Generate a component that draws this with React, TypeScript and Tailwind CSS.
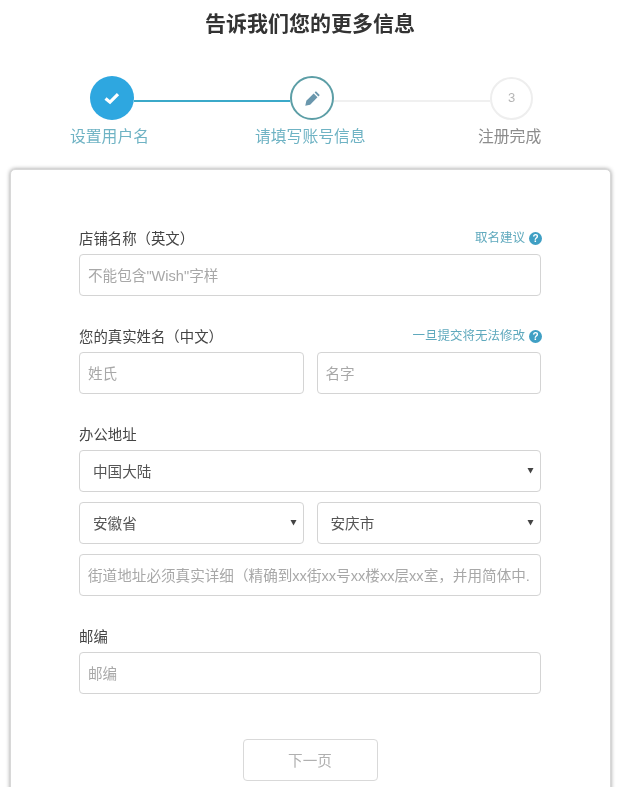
import React from "react";

const font = '"Liberation Sans", "Noto Sans CJK SC", sans-serif';

function Help() {
  return (
    <span className="mr-[-1px] flex h-[13px] w-[13px] items-center justify-center rounded-full bg-[#3f9fc4] text-[10px] font-bold leading-none text-white">?</span>
  );
}

function Label({ text, hint }: { text: string; hint?: string }) {
  return (
    <div className="flex h-[26px] items-center justify-between pb-[2px]">
      <span className="text-[14.4px] text-[#444] [text-spacing-trim:space-all]">{text}</span>
      {hint && (
        <span className="mb-[3px] flex items-center gap-[4px] text-[12.5px] text-[#5fa9bd]">
          {hint}
          <Help />
        </span>
      )}
    </div>
  );
}

function Field({ placeholder, className = "" }: { placeholder: string; className?: string }) {
  return (
    <div className={`flex h-[42px] items-center whitespace-nowrap rounded-[4px] border border-[#d4d4d4] bg-white pl-[8px] pt-[3px] text-[14.6px] text-[#a8a8a8] [text-spacing-trim:space-all] ${className}`}>
      {placeholder}
    </div>
  );
}

function Select({ value, className = "" }: { value: string; className?: string }) {
  return (
    <div className={`flex h-[42px] items-center justify-between rounded-[4px] border border-[#d4d4d4] bg-white pl-[13px] pr-[6px] text-[14.6px] text-[#555] ${className}`}>
      <span className="pt-[3px]">{value}</span>
      <svg width="7" height="7" viewBox="0 0 7 7" className="mt-[-2px]"><path d="M0.5 1h6L3.5 6.5z" fill="#444" /></svg>
    </div>
  );
}

export default function App() {
  return (
    <div className="h-[787px] w-[620px] overflow-hidden bg-white blur-[0.35px]" style={{ fontFamily: font }}>
      <h1 className="pt-[11px] text-center text-[21px] font-bold leading-[26px] text-[#333]">告诉我们您的更多信息</h1>

      <div className="ml-[90px] mt-[39px] flex w-[443px] items-center">
        <div className="flex h-[44px] w-[44px] shrink-0 items-center justify-center rounded-full bg-[#2ea7e0]">
          <svg width="16" height="14" viewBox="0 0 16 14"><path d="M1.5 7.5l4.5 3.7 8-8" fill="none" stroke="#fff" strokeWidth="3.2" /></svg>
        </div>
        <div className="mt-[5px] h-[2px] flex-1 bg-[#3ba9c9]" />
        <div className="flex h-[44px] w-[44px] shrink-0 items-center justify-center rounded-full border-2 border-[#5c9ea6] bg-white">
          <svg width="17" height="17" viewBox="0 0 16 16">
            <path d="M1.2 14.8l1-4.6 6.9-6.9 3.6 3.6-6.9 6.9z" fill="#6a97ad" />
            <path d="M10 2.4l1.2-1.2 3.6 3.6-1.2 1.2z" fill="#6a97ad" />
          </svg>
        </div>
        <div className="mt-[5px] h-[2px] flex-1 bg-[#f0f0f0]" />
        <div className="flex h-[43px] w-[43px] shrink-0 items-center justify-center rounded-full border-2 border-[#eeeeee] bg-white text-[13px] text-[#b5b5b5]">3</div>
      </div>

      <div className="mt-[3px] flex h-[28px] items-center text-[15.8px] leading-[28px]">
        <span className="ml-[70px] w-[185px] text-[#6fb3c4]">设置用户名</span>
        <span className="w-[223px] text-[#6fb3c4]">请填写账号信息</span>
        <span className="text-[#8c8c8c]">注册完成</span>
      </div>

      <div className="ml-[10px] mt-[18px] h-[640px] w-[601px] rounded-[5px] border border-[#d8d8d8] bg-white pl-[68px] pr-[69px] pt-[58px] shadow-[0_0_4px_rgba(0,0,0,0.4)]">
        <Label text="店铺名称（英文）" hint="取名建议" />
        <Field placeholder={'不能包含"Wish"字样'} />

        <div className="mt-[30px]">
          <Label text="您的真实姓名（中文）" hint="一旦提交将无法修改" />
          <div className="flex gap-[13px]">
            <Field placeholder="姓氏" className="flex-1" />
            <Field placeholder="名字" className="flex-1" />
          </div>
        </div>

        <div className="mt-[30px]">
          <Label text="办公地址" />
          <Select value="中国大陆" />
          <div className="mt-[10px] flex gap-[13px]">
            <Select value="安徽省" className="flex-1" />
            <Select value="安庆市" className="flex-1" />
          </div>
          <Field placeholder="街道地址必须真实详细（精确到xx街xx号xx楼xx层xx室，并用简体中." className="mt-[10px]" />
        </div>

        <div className="mt-[30px]">
          <Label text="邮编" />
          <Field placeholder="邮编" />
        </div>

        <div className="mt-[45px] flex justify-center">
          <div className="flex h-[42px] w-[135px] items-center justify-center rounded-[4px] border border-[#d9d9d9] pt-[3px] text-[14.6px] text-[#b0b0b0]">下一页</div>
        </div>
      </div>
    </div>
  );
}
